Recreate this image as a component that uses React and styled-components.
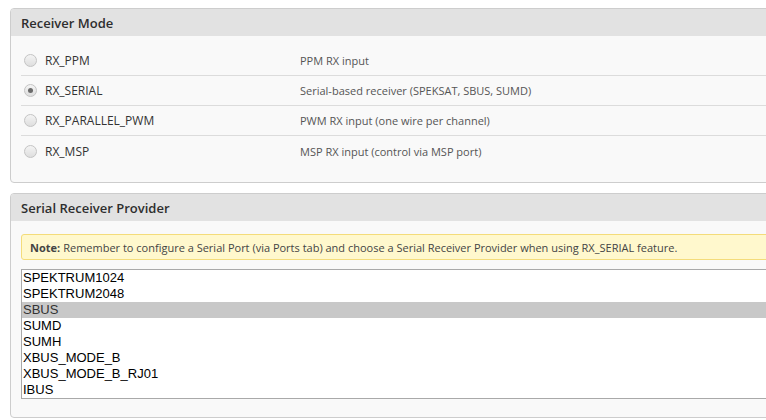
import React from "react";
import styled, { createGlobalStyle } from "styled-components";

const GlobalStyle = createGlobalStyle`
  body {
    margin: 0;
    background: #fff;
    overflow: hidden;
    font-family: "Open Sans", "DejaVu Sans", sans-serif;
  }
`;

const modes = [
  { name: "RX_PPM", desc: "PPM RX input" },
  { name: "RX_SERIAL", desc: "Serial-based receiver (SPEKSAT, SBUS, SUMD)", checked: true },
  { name: "RX_PARALLEL_PWM", desc: "PWM RX input (one wire per channel)" },
  { name: "RX_MSP", desc: "MSP RX input (control via MSP port)" },
];

const providers = [
  "SPEKTRUM1024",
  "SPEKTRUM2048",
  "SBUS",
  "SUMD",
  "SUMH",
  "XBUS_MODE_B",
  "XBUS_MODE_B_RJ01",
  "IBUS",
];

const Page = styled.div`
  width: 820px;
  padding: 8px 0 0 10px;
  display: flex;
  flex-direction: column;
  gap: 10px;
`;

const Panel = styled.div`
  border: 1px solid #cdcdcd;
  border-radius: 4px;
  background: #f9f9f9;
  overflow: hidden;
`;

const Header = styled.div`
  height: 27px;
  background: #e2e2e2;
  padding-left: 10px;
  display: flex;
  align-items: center;
  font-size: 13px;
  color: #2e2e2e;
  font-weight: 600;
`;

const Body = styled.div`
  padding: ${(p) => p.$pad};
`;

const Row = styled.div`
  height: 30px;
  display: flex;
  align-items: center;
  border-bottom: ${(p) => (p.$last ? "none" : "1px solid #dcdcdc")};
  box-sizing: border-box;
`;

const Radio = styled.span`
  width: 11px;
  height: 11px;
  margin-left: 3px;
  border-radius: 50%;
  border: 1px solid #c4c4c4;
  background: linear-gradient(#f4f4f4, #dedede);
  position: relative;
  flex: none;

  &::after {
    content: "";
    display: ${(p) => (p.$checked ? "block" : "none")};
    position: absolute;
    left: 3px;
    top: 3px;
    width: 5px;
    height: 5px;
    border-radius: 50%;
    background: #6b6b6b;
  }
`;

const Label = styled.span`
  width: 255px;
  margin-left: 8px;
  font-size: 12px;
  color: #333;
`;

const Desc = styled.span`
  font-size: 11px;
  color: #555;
`;

const Note = styled.div`
  background: #fff8cd;
  border: 1px solid #f4dc7a;
  border-radius: 3px;
  height: 24px;
  display: flex;
  align-items: center;
  padding-left: 8px;
  font-size: 11px;
  color: #444;

  b {
    font-weight: 700;
    margin-right: 3px;
  }
`;

const List = styled.div`
  margin-top: 9px;
  border: 1px solid #a9a9a9;
  background: #fff;
`;

const Option = styled.div`
  height: 16px;
  line-height: 16px;
  padding-left: 1px;
  font-family: "Liberation Sans", Arial, sans-serif;
  font-size: 13px;
  color: ${(p) => (p.$selected ? "#333" : "#000")};
  background: ${(p) => (p.$selected ? "#c8c8c8" : "transparent")};
`;

export default function App() {
  return (
    <>
      <GlobalStyle />
      <Page>
        <Panel>
          <Header>Receiver Mode</Header>
          <Body $pad="10px 0 16px 10px">
            {modes.map((m, i) => (
              <Row key={m.name} $last={i === modes.length - 1}>
                <Radio $checked={m.checked} />
                <Label>{m.name}</Label>
                <Desc>{m.desc}</Desc>
              </Row>
            ))}
          </Body>
        </Panel>
        <Panel>
          <Header>Serial Receiver Provider</Header>
          <Body $pad="13px 0 18px 10px">
            <Note>
              <b>Note:</b>Remember to configure a Serial Port (via Ports tab) and choose a Serial
              Receiver Provider when using RX_SERIAL feature.
            </Note>
            <List>
              {providers.map((p) => (
                <Option key={p} $selected={p === "SBUS"}>
                  {p}
                </Option>
              ))}
            </List>
          </Body>
        </Panel>
      </Page>
    </>
  );
}
